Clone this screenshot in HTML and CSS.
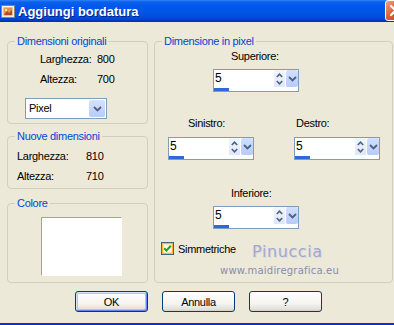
FILE: index.html
```html
<!DOCTYPE html>
<html lang="it">
<head>
  <meta charset="UTF-8">
  <title>Aggiungi bordatura</title>
  <link rel="stylesheet" href="styles.css">
</head>
<body>

  <div class="window">

    <!-- BARRA DEL TITOLO -->
    <div class="titlebar">
      <svg class="app-icon" width="14" height="15" viewBox="0 0 14 15">
        <rect x="0.5" y="1.5" width="13" height="12" fill="#f4efe6" stroke="#8b8478"/>
        <rect x="2.5" y="3.5" width="9" height="8" fill="#e39048"/>
        <path d="M3 11 L6 7 L8 9 L11 6 V11 Z" fill="#b04a2a"/>
        <circle cx="5" cy="6" r="1.2" fill="#fde7b0"/>
      </svg>
      <span class="title">Aggiungi bordatura</span>
      <span class="close-btn">
        <svg width="19" height="19" viewBox="0 0 19 19">
          <path d="M5 5 L14 14 M14 5 L5 14" stroke="#fff" stroke-width="2.2" stroke-linecap="round"/>
        </svg>
      </span>
    </div>

    <div class="content">
      <div class="colonne">

        <!-- COLONNA SINISTRA -->
        <div class="colonna-sx">
          <fieldset class="gruppo orig">
            <legend>Dimensioni originali</legend>
            <div class="dims">
              <span>Larghezza:</span><span>800</span>
              <span>Altezza:</span><span>700</span>
            </div>
            <div class="select">
              <span class="select-val">Pixel</span>
              <span class="select-btn">
                <svg width="9" height="6" viewBox="0 0 9 6"><polyline points="1,1 4.5,4.5 8,1" fill="none" stroke="#4d6185" stroke-width="1.8"/></svg>
              </span>
            </div>
          </fieldset>

          <fieldset class="gruppo nuove">
            <legend>Nuove dimensioni</legend>
            <div class="dims">
              <span>Larghezza:</span><span>810</span>
              <span>Altezza:</span><span>710</span>
            </div>
          </fieldset>

          <fieldset class="gruppo colore">
            <legend>Colore</legend>
            <div class="swatch"></div>
          </fieldset>
        </div>

        <!-- DIMENSIONE IN PIXEL -->
        <fieldset class="gruppo pixel">
          <legend>Dimensione in pixel</legend>
          <div class="pixel-corpo">
            <span class="etichetta centro sup">Superiore:</span>
            <div class="spin centrato">
              <div class="spin-top">
                <span class="spin-val">5</span>
                <span class="spin-frecce">
                  <svg width="7" height="5" viewBox="0 0 7 5"><polyline points="0.8,4 3.5,1.2 6.2,4" fill="none" stroke="#4d6185" stroke-width="1.6"/></svg>
                  <svg width="7" height="5" viewBox="0 0 7 5"><polyline points="0.8,1 3.5,3.8 6.2,1" fill="none" stroke="#4d6185" stroke-width="1.6"/></svg>
                </span>
                <span class="spin-drop">
                  <svg width="9" height="6" viewBox="0 0 9 6"><polyline points="1,1 4.5,4.5 8,1" fill="none" stroke="#4d6185" stroke-width="1.8"/></svg>
                </span>
              </div>
              <div class="spin-bar"><span></span></div>
            </div>

            <div class="riga">
              <div class="campo">
                <span class="etichetta sin">Sinistro:</span>
                <div class="spin">
                  <div class="spin-top">
                    <span class="spin-val">5</span>
                    <span class="spin-frecce">
                      <svg width="7" height="5" viewBox="0 0 7 5"><polyline points="0.8,4 3.5,1.2 6.2,4" fill="none" stroke="#4d6185" stroke-width="1.6"/></svg>
                      <svg width="7" height="5" viewBox="0 0 7 5"><polyline points="0.8,1 3.5,3.8 6.2,1" fill="none" stroke="#4d6185" stroke-width="1.6"/></svg>
                    </span>
                    <span class="spin-drop">
                      <svg width="9" height="6" viewBox="0 0 9 6"><polyline points="1,1 4.5,4.5 8,1" fill="none" stroke="#4d6185" stroke-width="1.8"/></svg>
                    </span>
                  </div>
                  <div class="spin-bar"><span></span></div>
                </div>
              </div>
              <div class="campo">
                <span class="etichetta des">Destro:</span>
                <div class="spin">
                  <div class="spin-top">
                    <span class="spin-val">5</span>
                    <span class="spin-frecce">
                      <svg width="7" height="5" viewBox="0 0 7 5"><polyline points="0.8,4 3.5,1.2 6.2,4" fill="none" stroke="#4d6185" stroke-width="1.6"/></svg>
                      <svg width="7" height="5" viewBox="0 0 7 5"><polyline points="0.8,1 3.5,3.8 6.2,1" fill="none" stroke="#4d6185" stroke-width="1.6"/></svg>
                    </span>
                    <span class="spin-drop">
                      <svg width="9" height="6" viewBox="0 0 9 6"><polyline points="1,1 4.5,4.5 8,1" fill="none" stroke="#4d6185" stroke-width="1.8"/></svg>
                    </span>
                  </div>
                  <div class="spin-bar"><span></span></div>
                </div>
              </div>
            </div>

            <span class="etichetta centro inf">Inferiore:</span>
            <div class="spin centrato">
              <div class="spin-top">
                <span class="spin-val">5</span>
                <span class="spin-frecce">
                  <svg width="7" height="5" viewBox="0 0 7 5"><polyline points="0.8,4 3.5,1.2 6.2,4" fill="none" stroke="#4d6185" stroke-width="1.6"/></svg>
                  <svg width="7" height="5" viewBox="0 0 7 5"><polyline points="0.8,1 3.5,3.8 6.2,1" fill="none" stroke="#4d6185" stroke-width="1.6"/></svg>
                </span>
                <span class="spin-drop">
                  <svg width="9" height="6" viewBox="0 0 9 6"><polyline points="1,1 4.5,4.5 8,1" fill="none" stroke="#4d6185" stroke-width="1.8"/></svg>
                </span>
              </div>
              <div class="spin-bar"><span></span></div>
            </div>

            <label class="check">
              <svg class="check-box" width="13" height="13" viewBox="0 0 13 13">
                <rect x="0.5" y="0.5" width="12" height="12" fill="#fff" stroke="#1c5180"/>
                <rect x="1.5" y="1.5" width="10" height="10" fill="#fdf6e0" stroke="#f8b53a" stroke-width="1.4"/>
                <polyline points="3.2,6.2 5.4,8.6 9.8,3.8" fill="none" stroke="#21a121" stroke-width="2"/>
              </svg>
              <span>Simmetriche</span>
            </label>

            <!-- firma sopra il riquadro -->
            <div class="watermark">
              <span class="wm-nome">Pinuccia</span>
              <span class="wm-sito">www.maidiregrafica.eu</span>
            </div>
          </div>
        </fieldset>
      </div>

      <div class="pulsanti">
        <button class="btn default">OK</button>
        <button class="btn">Annulla</button>
        <button class="btn">?</button>
      </div>
    </div>
  </div>

</body>
</html>
```

FILE: styles.css
```css
* {
  box-sizing: border-box;
}

body {
  margin: 0;
  background: #ece9d8;
  font-family: "Liberation Sans", Arial, sans-serif;
  font-size: 11px;
  letter-spacing: -0.3px;
  color: #000;
  overflow: hidden;
}

.window {
  width: 394px;
  height: 325px;
  overflow: hidden;
  border-bottom: 2px solid #0831d9;
  display: flex;
  flex-direction: column;
}

/* BARRA DEL TITOLO */
.titlebar {
  height: 22px;
  flex-shrink: 0;
  display: flex;
  align-items: center;
  padding-left: 1px;
  color: #fff;
  background: linear-gradient(to bottom, #2f83f7 0, #0b60ea 2px, #0058ee 6px, #0055e5 13px, #004ad8 18px, #003fc4 20px, #0030a4 22px);
}

.app-icon {
  margin-right: 3px;
  flex-shrink: 0;
}

.title {
  font-weight: bold;
  font-size: 13px;
  letter-spacing: 0;
  text-shadow: 1px 1px 0 #0a1e87;
}

.close-btn {
  margin-left: auto;
  margin-right: -12px;
  align-self: flex-start;
  width: 21px;
  height: 21px;
  flex-shrink: 0;
  border: 1px solid #fff;
  border-radius: 3px;
  background: linear-gradient(135deg, #f3a086 0, #e0603a 45%, #c43c1c 100%);
}

.close-btn svg {
  display: block;
}

/* CONTENUTO */
.content {
  flex: 1;
  padding: 13px 0 0 7px;
}

.colonne {
  display: flex;
  gap: 6px;
}

.colonna-sx {
  display: flex;
  flex-direction: column;
  width: 141px;
}

.gruppo {
  margin: 0;
  padding: 0;
  min-width: 0;
  border: 1px solid #d0d0bf;
  border-radius: 4px;
}

.gruppo legend {
  margin-left: 7px;
  padding: 0 2px;
  line-height: 13px;
  color: #0046d5;
}

.orig {
  height: 89px;
}

.nuove {
  height: 59px;
  margin-top: 6px;
}

.colore {
  height: 86px;
  margin-top: 8px;
}

.dims {
  display: grid;
  line-height: 20px;
}

.orig .dims {
  grid-template-columns: 57px auto;
  padding-left: 32px;
  margin-top: 1px;
}

.nuove .dims {
  grid-template-columns: 69px auto;
  padding-left: 9px;
  margin-top: 3px;
}

.select {
  display: flex;
  width: 82px;
  height: 21px;
  margin: 9px 0 0 17px;
  border: 1px solid #7f9db9;
  background: #fff;
}

.select-val {
  flex: 1;
  padding-left: 3px;
  line-height: 19px;
}

.select-btn {
  width: 16px;
  margin: 1px;
  display: flex;
  align-items: center;
  justify-content: center;
  border-radius: 2px;
  background: linear-gradient(#d6e2fd, #b9cbf6);
}

.swatch {
  width: 81px;
  height: 59px;
  margin: 7px 0 0 33px;
  background: #fff;
  border: 1px solid;
  border-color: #a7a391 #fff #fff #a7a391;
}

/* DIMENSIONE IN PIXEL */
.pixel {
  width: 239px;
  height: 248px;
}

.pixel-corpo {
  position: relative;
  display: flex;
  flex-direction: column;
  align-items: flex-start;
}

.etichetta {
  display: block;
  line-height: 13px;
}

.centro {
  margin-left: 76px;
}

.sup {
  margin-top: 2px;
}

.inf {
  margin-top: 27px;
}

.sin {
  margin-left: 20px;
}

.des {
  margin-left: 2px;
}

.spin {
  width: 86px;
  height: 23px;
  border: 1px solid #7f9db9;
  background: #fff;
  display: flex;
  flex-direction: column;
}

.centrato {
  margin: 6px 0 0 58px;
}

.campo .spin {
  margin-top: 7px;
}

.spin-top {
  display: flex;
  height: 17px;
}

.spin-val {
  flex: 1;
  padding-left: 1px;
  font-size: 12px;
  line-height: 17px;
}

.spin-frecce {
  width: 11px;
  display: flex;
  flex-direction: column;
  align-items: center;
  justify-content: center;
  gap: 2px;
  background: linear-gradient(#f3f6fd, #dde6fa);
}

.spin-frecce svg,
.spin-drop svg,
.select-btn svg {
  display: block;
}

.spin-drop {
  width: 12px;
  margin-left: 1px;
  display: flex;
  align-items: center;
  justify-content: center;
  border-radius: 2px;
  background: linear-gradient(#d3e0fd, #b8caf6);
}

.spin-bar {
  height: 4px;
  display: flex;
  align-items: flex-end;
}

.spin-bar span {
  width: 15px;
  height: 3px;
  background: #3168d5;
}

.riga {
  display: flex;
  gap: 40px;
  margin: 25px 0 0 13px;
}

.campo {
  display: flex;
  flex-direction: column;
  align-items: flex-start;
}

.check {
  display: flex;
  align-items: center;
  gap: 4px;
  margin: 13px 0 0 6px;
}

.check-box {
  display: block;
}

.watermark {
  position: absolute;
  left: 65px;
  top: 195px;
  display: flex;
  flex-direction: column;
  align-items: flex-start;
  font-family: "DejaVu Sans", sans-serif;
}

.wm-nome {
  margin-left: 32px;
  font-size: 16px;
  line-height: 18px;
  letter-spacing: 0.6px;
  color: #a3a8ca;
  text-shadow: 1px 1px 0 #d9d8e4;
}

.wm-sito {
  margin-top: 4px;
  font-size: 10px;
  line-height: 12px;
  letter-spacing: 0.2px;
  color: #8a8da8;
}

/* PULSANTI */
.pulsanti {
  display: flex;
  gap: 14px;
  margin: 8px 0 0 68px;
}

.btn {
  width: 73px;
  height: 21px;
  padding: 0;
  border: 1px solid #003c74;
  border-radius: 3px;
  font: inherit;
  letter-spacing: -0.3px;
  color: #000;
  background: linear-gradient(#ffffff 0, #f5f4ef 60%, #e3e1d8 90%, #d6d0c5 100%);
}

.btn.default {
  box-shadow: inset 1px 1px 0 #cee7ff, inset -1px -1px 0 #6982ee, inset 0 0 0 2px #a9c6f4;
}
```
